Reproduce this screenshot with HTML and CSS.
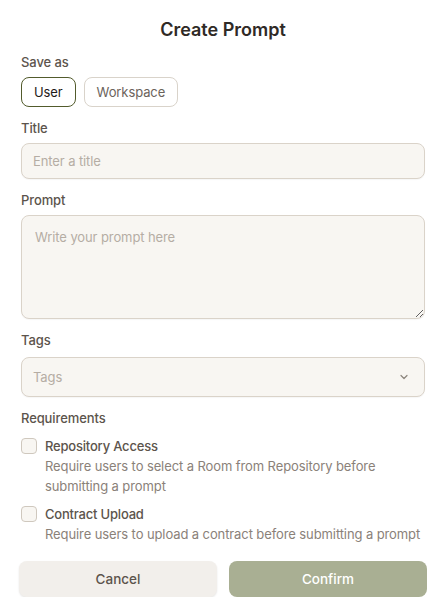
FILE: index.html
```html
<!DOCTYPE html>
<html lang="en">

<head>
    <meta charset="UTF-8" />
    <title>Create Prompt</title>
    <link rel="stylesheet" href="styles.css">
</head>

<body>
    <div class="prompt-dialog">
        <h2>Create Prompt</h2>

        <label class="field-label label-first">Save as</label>
        <div class="save-as">
            <button class="chip chip-active">User</button>
            <button class="chip">Workspace</button>
        </div>

        <label class="field-label" for="title">Title</label>
        <input type="text" id="title" class="text-input" placeholder="Enter a title" />

        <label class="field-label" for="prompt">Prompt</label>
        <textarea id="prompt" class="text-area" placeholder="Write your prompt here"></textarea>

        <label class="field-label label-tags">Tags</label>
        <div class="select-box">
            <span>Tags</span>
            <svg width="12" height="12" viewBox="0 0 12 12" fill="none">
                <path d="M3 4.5l3 3 3-3" stroke="#8c857d" stroke-width="1.2" stroke-linecap="round" stroke-linejoin="round" />
            </svg>
        </div>

        <label class="field-label">Requirements</label>
        <div class="requirement">
            <span class="check"></span>
            <div>
                <div class="req-title">Repository Access</div>
                <div class="req-desc">Require users to select a Room from Repository before submitting a prompt</div>
            </div>
        </div>
        <div class="requirement">
            <span class="check"></span>
            <div>
                <div class="req-title">Contract Upload</div>
                <div class="req-desc">Require users to upload a contract before submitting a prompt</div>
            </div>
        </div>

        <div class="actions">
            <button class="btn btn-cancel">Cancel</button>
            <button class="btn btn-confirm">Confirm</button>
        </div>
    </div>
</body>

</html>
```

FILE: styles.css
```css
body {
    margin: 0;
    background: #fff;
    font-family: Inter, "Noto Sans", sans-serif;
    color: #5c544c;
}

.prompt-dialog {
    display: flex;
    flex-direction: column;
    padding: 18px 20px 0 21px;
}

.prompt-dialog h2 {
    margin: 0;
    font-size: 18px;
    line-height: 24px;
    font-weight: 600;
    text-align: center;
    color: #2f2a26;
}

.field-label {
    margin: 12px 0 6px;
    font-size: 13px;
    line-height: 18px;
    font-weight: 500;
    letter-spacing: -0.1px;
    color: #5c544c;
}

.label-first {
    margin-top: 11px;
}

.label-tags {
    margin-bottom: 8px;
}

.save-as {
    display: flex;
    gap: 8px;
}

.chip {
    height: 30px;
    padding: 0 12px;
    font-family: inherit;
    font-size: 13px;
    letter-spacing: -0.1px;
    color: #6b635b;
    background: #fff;
    border: 1px solid #d9d3ca;
    border-radius: 8px;
}

.chip-active {
    color: #1f1c19;
    border-color: #525b2c;
}

.text-input,
.text-area,
.select-box {
    box-sizing: border-box;
    width: 100%;
    font-family: inherit;
    font-size: 13px;
    letter-spacing: -0.1px;
    background: #f8f6f2;
    border: 1px solid #dad3c9;
    border-radius: 8px;
    color: #3a342f;
    box-shadow: 0 1px 1px rgba(60, 50, 40, 0.04);
}

.text-input {
    height: 36px;
    padding: 0 11px;
}

.text-area {
    height: 104px;
    padding: 13px 13px;
    resize: vertical;
}

.text-input::placeholder,
.text-area::placeholder {
    color: #b5ada4;
}

.select-box {
    height: 40px;
    padding: 0 14px 0 11px;
    display: flex;
    align-items: center;
    justify-content: space-between;
    color: #b5ada4;
}

.requirement {
    display: flex;
    gap: 8px;
    margin-top: 4px;
}

.requirement + .requirement {
    margin-top: 9px;
}

.check {
    box-sizing: border-box;
    flex: none;
    width: 16px;
    height: 16px;
    margin-top: 1px;
    border: 1px solid #cfc8be;
    border-radius: 4px;
    background: #f8f6f2;
}

.req-title {
    font-size: 13px;
    line-height: 18px;
    font-weight: 500;
    letter-spacing: -0.2px;
    color: #5c544c;
}

.req-desc {
    margin-top: 1px;
    font-size: 13px;
    line-height: 20px;
    letter-spacing: -0.1px;
    color: #8a8179;
}

.actions {
    display: flex;
    gap: 12px;
    margin: 17px -2px 0 -2px;
}

.btn {
    flex: 1;
    height: 36px;
    font-family: inherit;
    font-size: 13.5px;
    font-weight: 500;
    border: none;
    border-radius: 8px;
}

.btn-cancel {
    background: #f2efeb;
    color: #5c544c;
    box-shadow: 0 1px 2px rgba(60, 50, 40, 0.12);
}

.btn-confirm {
    background: #a9af93;
    color: #fff;
}
```
